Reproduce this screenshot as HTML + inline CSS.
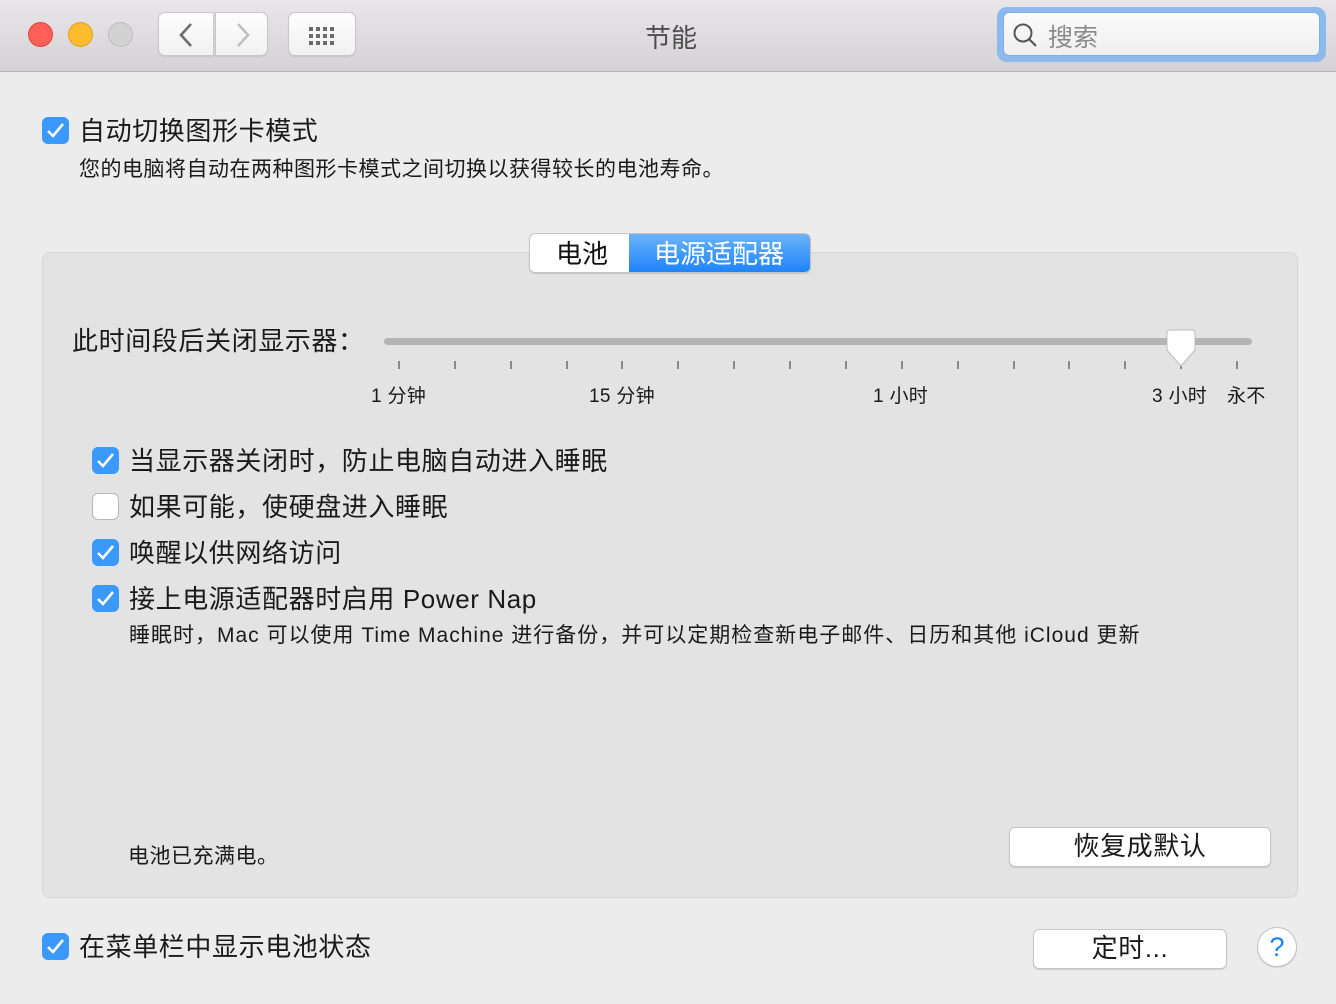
<!DOCTYPE html>
<html><head><meta charset="utf-8"><style>
*{margin:0;padding:0;box-sizing:border-box}
body{width:1336px;height:1004px;background:#ececec;font-family:"Liberation Sans","Noto Sans CJK SC",sans-serif;color:#1a1a1a;position:relative;overflow:hidden}
.a{position:absolute;white-space:nowrap}
.tb{left:0;top:0;width:1336px;height:72px;background:linear-gradient(#e8e6e8,#d4d2d4);border-bottom:1px solid #b3b3b3}
.dot{width:25px;height:25px;border-radius:50%;top:22px}
.btn{background:linear-gradient(#fdfdfd,#f1f1f1);border:1px solid #c8c8c8;border-radius:7px;box-shadow:0 1px 1px rgba(0,0,0,.08)}
.cb{width:27px;height:27px;border-radius:6px;background:#3b99fc}
.cb svg{position:absolute;left:4px;top:5px}
.cbo{width:27px;height:27px;border-radius:6px;background:#fff;border:1px solid #b8b8b8}
.l{font-size:26px;letter-spacing:0.6px}
.s{font-size:21px;letter-spacing:0.5px}
.tick{width:2px;height:8px;background:#8a8a8a;top:361px}
.pb{background:#fff;border:1px solid #c6c6c6;border-radius:6px;box-shadow:0 1px 1px rgba(0,0,0,.12);font-size:26px;letter-spacing:0.6px;text-align:center}
</style></head><body>
<div class="a tb"></div>
<div class="a dot" style="left:28px;background:#fe5f57;border:1px solid #e0443e"></div>
<div class="a dot" style="left:68px;background:#febc2e;border:1px solid #dea123"></div>
<div class="a dot" style="left:108px;background:#d2d2d2;border:1px solid #bdbdbd"></div>
<div class="a btn" style="left:158px;top:12px;width:56px;height:44px;border-radius:7px 0 0 7px"><svg width="56" height="44"><path d="M32 11 L22 22 L32 33" stroke="#6e6e6e" stroke-width="2.6" fill="none"/></svg></div>
<div class="a btn" style="left:215px;top:12px;width:53px;height:44px;border-radius:0 7px 7px 0"><svg width="53" height="44"><path d="M22 11 L32 22 L22 33" stroke="#c0c0c0" stroke-width="2.6" fill="none"/></svg></div>
<div class="a btn" style="left:288px;top:12px;width:68px;height:44px"><svg width="68" height="44"><g fill="#6a6a6a">
<rect x="20" y="14" width="4" height="4"/><rect x="27" y="14" width="4" height="4"/><rect x="34" y="14" width="4" height="4"/><rect x="41" y="14" width="4" height="4"/>
<rect x="20" y="21" width="4" height="4"/><rect x="27" y="21" width="4" height="4"/><rect x="34" y="21" width="4" height="4"/><rect x="41" y="21" width="4" height="4"/>
<rect x="20" y="28" width="4" height="4"/><rect x="27" y="28" width="4" height="4"/><rect x="34" y="28" width="4" height="4"/><rect x="41" y="28" width="4" height="4"/></g></svg></div>
<div class="a" style="left:645px;top:18px;font-size:26px;color:#4d4d4d">节能</div>
<div class="a" style="left:997px;top:7px;width:329px;height:55px;border-radius:10px;background:#8db9ec"></div>
<div class="a" style="left:1003px;top:12px;width:317px;height:44px;border-radius:6px;background:linear-gradient(#fbfbfb,#efefef);border:1px solid #7faee6"></div>
<svg class="a" style="left:1012px;top:22px" width="28" height="28"><circle cx="11" cy="11" r="8.5" stroke="#555" stroke-width="2" fill="none"/><path d="M17 17 L24 24" stroke="#555" stroke-width="2.2"/></svg>
<div class="a" style="left:1048px;top:18px;font-size:25px;color:#8a8a8a">搜索</div>

<div class="a cb" style="left:42px;top:117px"><svg width="20" height="18"><path d="M2 9 L7 14 L17 2" stroke="#fff" stroke-width="2.6" fill="none"/></svg></div>
<div class="a l" style="left:79px;top:111px">自动切换图形卡模式</div>
<div class="a s" style="left:79px;top:153px">您的电脑将自动在两种图形卡模式之间切换以获得较长的电池寿命。</div>

<div class="a" style="left:42px;top:252px;width:1256px;height:646px;background:#e3e3e3;border:1px solid #d6d6d6;border-radius:8px"></div>
<div class="a" style="left:529px;top:233px;width:282px;height:40px;border-radius:6px;background:#fff;border:1px solid #c4c4c4;box-shadow:0 1px 1px rgba(0,0,0,.12);overflow:hidden">
<div class="a" style="left:99px;top:0;width:183px;height:40px;background:linear-gradient(#6cb3fa,#1a82fb)"></div>
<div class="a" style="left:26px;top:0px;font-size:26px;color:#111">电池</div>
<div class="a" style="left:124px;top:0px;font-size:26px;color:#fff">电源适配器</div></div>

<div class="a l" style="left:72px;top:321px">此时间段后关闭显示器：</div>
<div class="a" style="left:384px;top:338px;width:868px;height:7px;border-radius:4px;background:#b4b4b4"></div>
<div class="a tick" style="left:398px"></div><div class="a tick" style="left:454px"></div><div class="a tick" style="left:510px"></div><div class="a tick" style="left:566px"></div><div class="a tick" style="left:621px"></div><div class="a tick" style="left:677px"></div><div class="a tick" style="left:733px"></div><div class="a tick" style="left:789px"></div><div class="a tick" style="left:845px"></div><div class="a tick" style="left:901px"></div><div class="a tick" style="left:957px"></div><div class="a tick" style="left:1013px"></div><div class="a tick" style="left:1068px"></div><div class="a tick" style="left:1124px"></div><div class="a tick" style="left:1180px"></div><div class="a tick" style="left:1236px"></div>
<svg class="a" style="left:1164px;top:328px" width="34" height="40"><path d="M3 5 Q3 2 6 2 L28 2 Q31 2 31 5 L31 22 L17 38 L3 22 Z" fill="#fff" stroke="#bdbdbd" stroke-width="1"/></svg>
<div class="a" style="left:371px;top:381px;font-size:19px;letter-spacing:0.3px">1 分钟</div>
<div class="a" style="left:589px;top:381px;font-size:19px;letter-spacing:0.3px">15 分钟</div>
<div class="a" style="left:873px;top:381px;font-size:19px;letter-spacing:0.3px">1 小时</div>
<div class="a" style="left:1152px;top:381px;font-size:19px;letter-spacing:0.3px">3 小时</div>
<div class="a" style="left:1227px;top:381px;font-size:19px;letter-spacing:0.3px">永不</div>

<div class="a cb" style="left:92px;top:447px"><svg width="20" height="18"><path d="M2 9 L7 14 L17 2" stroke="#fff" stroke-width="2.6" fill="none"/></svg></div>
<div class="a l" style="left:129px;top:441px">当显示器关闭时，防止电脑自动进入睡眠</div>
<div class="a cbo" style="left:92px;top:493px"></div>
<div class="a l" style="left:129px;top:487px">如果可能，使硬盘进入睡眠</div>
<div class="a cb" style="left:92px;top:539px"><svg width="20" height="18"><path d="M2 9 L7 14 L17 2" stroke="#fff" stroke-width="2.6" fill="none"/></svg></div>
<div class="a l" style="left:129px;top:533px">唤醒以供网络访问</div>
<div class="a cb" style="left:92px;top:585px"><svg width="20" height="18"><path d="M2 9 L7 14 L17 2" stroke="#fff" stroke-width="2.6" fill="none"/></svg></div>
<div class="a l" style="left:129px;top:579px">接上电源适配器时启用 Power Nap</div>
<div class="a s" style="left:129px;top:619px;letter-spacing:1px">睡眠时，Mac 可以使用 Time Machine 进行备份，并可以定期检查新电子邮件、日历和其他 iCloud 更新</div>

<div class="a s" style="left:128px;top:840px">电池已充满电。</div>
<div class="a pb" style="left:1009px;top:827px;width:262px;height:40px;line-height:36px">恢复成默认</div>

<div class="a cb" style="left:42px;top:933px"><svg width="20" height="18"><path d="M2 9 L7 14 L17 2" stroke="#fff" stroke-width="2.6" fill="none"/></svg></div>
<div class="a l" style="left:79px;top:927px">在菜单栏中显示电池状态</div>
<div class="a pb" style="left:1033px;top:929px;width:194px;height:40px;line-height:36px">定时...</div>
<div class="a" style="left:1257px;top:927px;width:40px;height:40px;border-radius:50%;background:#fff;border:1px solid #c4c4c4;box-shadow:0 1px 1px rgba(0,0,0,.12);color:#1a82fb;font-size:27px;text-align:center;line-height:38px">?</div>
</body></html>
